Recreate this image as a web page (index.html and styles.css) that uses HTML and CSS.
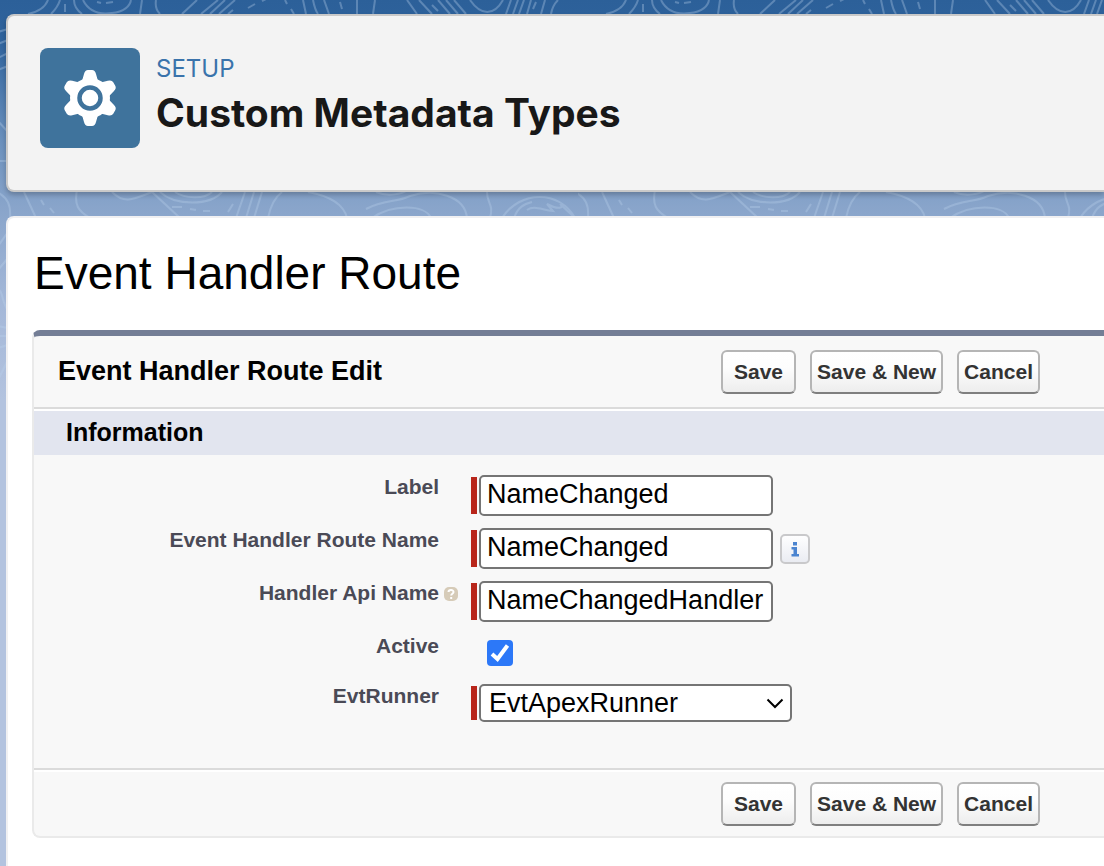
FILE: index.html
```html
<!DOCTYPE html>
<html lang="en">
<head>
<meta charset="utf-8">
<title>Custom Metadata Types</title>
<link rel="stylesheet" href="styles.css">
</head>
<body>
<svg class="topography" aria-hidden="true">
  <defs>
    <pattern id="contours" width="578" height="420" patternUnits="userSpaceOnUse">
      <g fill="none" stroke="#b9d0ea" stroke-opacity=".34" stroke-width="2">
        <path d="M48 0C45 8 38 12 28 14M60 0C58 7 54 11 51 14M65 4V12M74 0C74 6 78 11 82 14M83 0C88 10 98 15 112 13C124 12 130 6 131 0M97 2l4 1M106 3l7-1M142 0L140 14M156 0C155 6 157 11 160 14M197 0L182 14M218 0L201 14M225 0L210 14M235 0L219 14M228 14L233 10M248 8l7-4M262 1l4-2M285 0l2 4M291 9l3 5M303 0l3 14M313 0C314 5 315 10 318 14M324 0l5 14M340 2l2 7M357 0V14M375 0L373 14"/>
        <path d="M407 0l10 14M419 0l13 14M432 5l6 6M438 0l12 14M446 0l12 14M454 0l12 14M470 0C481 16 494 16 503 0M511 0l-5 14M518 0l-5 14M524 0l-5 14M531 0l-4 14M536 2l-3 7M545 0l-4 14M558 0C554 4 552 8 551 14"/>
        <path d="M-3 192C8 198 11 205 10 218M24 192L36 218M41 200l3 5M50 208l4 5M77 190C74 205 78 211 90 218M112 192C124 204 132 200 152 192L180 218M160 192C175 206 210 206 222 192M175 192C185 199 205 199 212 192M172 207h10M190 209l6 1M203 211h7M228 212l5-8M245 192L236 218M254 192L246 218M262 192L254 218M282 192C274 198 270 208 268 218M308 192C330 196 344 205 347 218"/>
        <path d="M366 209C385 199 395 203 410 196C435 188 465 196 467 218M372 218C392 204 425 204 431 218M376 192C388 197 402 194 408 190M487 192C487 204 494 204 490 218M502 218C520 190 560 190 575 218M514 218C518 207 524 204 532 202M527 210C534 205 542 210 553 211L547 204C558 210 565 208 560 204L574 217"/>
        <path d="M-2 32L8 29M-2 44L8 40M-2 58L8 53M-2 70L8 66M-2 121L8 132M-2 161H8M-2 246L8 232M-2 270L8 258M-2 292C2 286 2 304 8 310M-2 326L8 328M-2 336H8M-2 348L8 345M-2 380L8 360"/>
      </g>
    </pattern>
  </defs>
  <rect width="100%" height="400" fill="url(#contours)"/>
</svg>
<div class="page">
  <header class="setup-header">
    <svg class="setup-icon" viewBox="0 0 100 100" aria-hidden="true">
      <defs><path id="tooth" d="M-8-17L-6-24Q-5-28-2-28H2Q5-28 6-24L8-17Z"/></defs>
      <g transform="translate(50 50)" fill="#fff">
        <circle r="20"/>
        <use href="#tooth"/><use href="#tooth" transform="rotate(60)"/><use href="#tooth" transform="rotate(120)"/>
        <use href="#tooth" transform="rotate(180)"/><use href="#tooth" transform="rotate(240)"/><use href="#tooth" transform="rotate(300)"/>
        <circle r="10.5" fill="none" stroke="#3f739c" stroke-width="4.5"/>
      </g>
    </svg>
    <div>
      <p class="setup-eyebrow">SETUP</p>
      <h1 class="setup-title">Custom Metadata Types</h1>
    </div>
  </header>

  <main class="content">
    <h2 class="content-title">Event Handler Route</h2>
    <form class="panel">
      <div class="panel-bar panel-head">
        <h3 class="panel-title">Event Handler Route Edit</h3>
        <div class="actions">
          <button type="button" class="btn btn-save">Save</button>
          <button type="button" class="btn">Save &amp; New</button>
          <button type="button" class="btn">Cancel</button>
        </div>
      </div>
      <h4 class="section-title">Information</h4>
      <div class="fields">
        <div class="row">
          <label class="label" for="label">Label</label>
          <div class="control"><span class="required"></span><input class="text" id="label" type="text" value="NameChanged"></div>
        </div>
        <div class="row">
          <label class="label" for="name">Event Handler Route Name</label>
          <div class="control"><span class="required"></span><input class="text" id="name" type="text" value="NameChanged">
            <button type="button" class="info" aria-label="Information">
              <svg viewBox="0 0 30 30" width="30" height="30" aria-hidden="true">
                <defs><linearGradient id="infoFill" x2="0" y2="1"><stop stop-color="#fff"/><stop offset="1" stop-color="#e9ebf1"/></linearGradient></defs>
                <rect x="1" y="1" width="28" height="28" rx="4" fill="url(#infoFill)" stroke="#c9c9cb" stroke-width="2"/>
                <path d="M13 8h4v3.500h-4zM11.500 13H17v7h2v2.500h-7.500V20h2v-4.500h-2z" fill="#4b84d0"/>
              </svg>
            </button>
          </div>
        </div>
        <div class="row">
          <label class="label" for="api">Handler Api Name</label>
          <svg class="help" viewBox="0 0 14 14" aria-hidden="true">
            <rect width="14" height="14" rx="5" fill="#d6cbb8"/>
            <path d="M4.500 5C4.500 2.500 9.500 2.300 9.500 5C9.500 6.800 7.200 6.700 7.200 8.500M7.200 10v2" fill="none" stroke="#fff" stroke-width="2"/>
          </svg>
          <div class="control"><span class="required"></span><input class="text" id="api" type="text" value="NameChangedHandler"></div>
        </div>
        <div class="row">
          <label class="label" for="active">Active</label>
          <div class="control control-check">
            <input class="check" id="active" type="checkbox" checked>
            <svg class="tick" viewBox="0 0 26 26" aria-hidden="true"><path d="M5 14L10.500 19L20.500 5.500" fill="none" stroke="#fff" stroke-width="4"/></svg>
          </div>
        </div>
        <div class="row">
          <label class="label" for="runner">EvtRunner</label>
          <div class="control"><span class="required"></span>
            <div class="select-box">
              <select class="select" id="runner"><option>EvtApexRunner</option></select>
              <svg class="chevron" viewBox="0 0 18 11" aria-hidden="true"><path d="M1.500 1.500L9 9L16.500 1.500" fill="none" stroke="#000" stroke-width="2"/></svg>
            </div>
          </div>
        </div>
      </div>
      <div class="panel-bar panel-foot">
        <div class="actions">
          <button type="button" class="btn btn-save">Save</button>
          <button type="button" class="btn">Save &amp; New</button>
          <button type="button" class="btn">Cancel</button>
        </div>
      </div>
    </form>
  </main>
</div>
</body>
</html>
```
FILE: styles.css
```css
* { box-sizing: border-box; }

body {
  margin: 0;
  min-height: 100vh;
  font-family: "Liberation Sans", Arial, sans-serif;
  color: #000;
  background: #b3c3df linear-gradient(#2c6099 0, #2f639d 40px, #6a90bd 140px, #88a4ca 205px, #a3b7d8 300px, #b3c3df 400px) no-repeat;
}

h1, h2, h3, h4, p { margin: 0; }

.topography {
  position: absolute;
  top: 0;
  left: 0;
  width: 100%;
  height: 400px;
}

.page {
  position: relative;
  display: flex;
  flex-direction: column;
  gap: 24px;
  min-height: 100vh;
  padding: 14px 0 0 6px;
}

.setup-header {
  display: flex;
  gap: 16px;
  min-height: 178px;
  padding: 32px;
  border: 2px solid #c9c9c9;
  border-right: 0;
  border-radius: 8px 0 0 8px;
  background: #f3f3f3;
  box-shadow: 0 3px 5px rgba(0, 0, 0, .22);
  font-family: Inter, sans-serif;
}

.setup-icon {
  flex: none;
  width: 100px;
  height: 100px;
  border-radius: 8px;
  background: #3f739c;
}

.setup-eyebrow {
  padding-top: 5px;
  font-size: 24px;
  line-height: 32px;
  color: #3a73ab;
}

.setup-title {
  font-size: 39px;
  line-height: 56px;
  font-weight: 700;
  color: #181818;
}

.content {
  flex: 1;
  padding: 28px 0 28px 24px;
  border: 2px solid #f0f0f2;
  border-width: 2px 0 0 2px;
  border-radius: 8px 0 0 0;
  background: #fff;
}

.content-title {
  padding-left: 2px;
  font-size: 46px;
  line-height: 54px;
  font-weight: 400;
}

.panel {
  margin-top: 30px;
  border: 2px solid #eaeaea;
  border-top: 6px solid #747e96;
  border-right: 0;
  border-radius: 8px 0 0 8px;
  background: #f8f8f8;
}

.panel-bar {
  display: grid;
  grid-template-columns: 687px 1fr;
}

.panel-head {
  padding: 14px 0 13px;
  border-bottom: 2px solid #dbdbdb;
}

.panel-foot {
  padding: 12px 0 10px;
  border-top: 2px solid #dbdbdb;
  box-shadow: inset 0 2px #fff;
}

.panel-foot .actions { grid-column: 2; }

.panel-title {
  padding-left: 24px;
  font-size: 27px;
  line-height: 42px;
}

.actions {
  display: flex;
  gap: 14px;
}

.btn {
  height: 44px;
  padding: 0 5px;
  border: 2px solid #b5b5b5;
  border-bottom-color: #7f7f7f;
  border-radius: 6px;
  background: linear-gradient(#fff, #fdfdfd 40%, #ededed);
  font: bold 21px/24px "Liberation Sans", Arial, sans-serif;
  color: #333;
}

.btn-save { padding: 0 11px; }

.section-title {
  padding: 0 0 2px 32px;
  border-top: 2px solid #fff;
  background: #e2e5ef;
  font-size: 25px;
  line-height: 42px;
}

.fields {
  display: flex;
  flex-direction: column;
  gap: 12px;
  padding: 20px 0 46px;
}

.row {
  display: grid;
  grid-template-columns: 405px 32px 1fr;
  align-items: start;
  min-height: 38px;
}

.label {
  font-size: 21px;
  line-height: 24px;
  font-weight: 700;
  text-align: right;
  color: #4a4a56;
}

.help {
  width: 14px;
  height: 14px;
  margin: 6px 0 0 5px;
}

.control {
  grid-column: 3;
  display: flex;
  align-items: center;
}

.required {
  align-self: stretch;
  width: 6px;
  margin: 2px 2px 2px 0;
  background: #b8261b;
}

.text {
  width: 294px;
  height: 41px;
  padding: 0 5px 3px 6px;
  border: 2px solid #757575;
  border-radius: 5px;
  background: #fff;
  font: 27px/32px "Liberation Sans", Arial, sans-serif;
  color: #000;
}

.info {
  width: 30px;
  height: 30px;
  margin-left: 7px;
  padding: 0;
  border: 0;
  background: none;
}

.info svg { display: block; }

.control-check {
  position: relative;
  padding: 6px 0 0 16px;
}

.check {
  appearance: none;
  width: 26px;
  height: 26px;
  margin: 0;
  border-radius: 4px;
  background: #2c78f8;
}

.tick {
  position: absolute;
  left: 16px;
  bottom: 0;
  width: 26px;
  height: 26px;
  pointer-events: none;
}

.select-box { position: relative; }

.select {
  appearance: none;
  display: block;
  width: 313px;
  height: 38px;
  padding: 0 32px 0 8px;
  border: 2px solid #757575;
  border-radius: 5px;
  background: #fff;
  font: 27px/32px "Liberation Sans", Arial, sans-serif;
  color: #000;
}

.chevron {
  position: absolute;
  top: 14px;
  right: 8px;
  width: 18px;
  height: 11px;
  pointer-events: none;
}
```
